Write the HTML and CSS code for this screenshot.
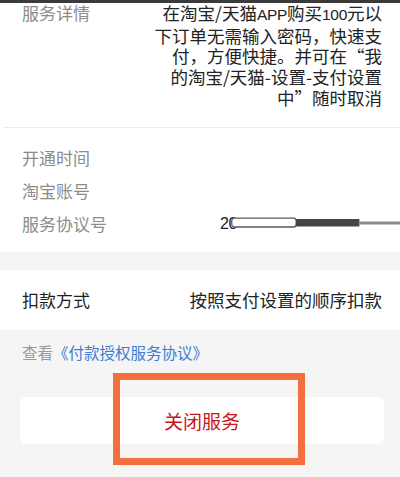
FILE: index.html
```html
<!DOCTYPE html>
<html lang="zh-CN">
<head>
<meta charset="utf-8">
<link rel="stylesheet" href="styles.css">
</head>
<body>
<div class="page">
  <div class="topbar"></div>
  <section class="detail">
    <div class="label">服务详情</div>
    <div class="detail-text">在淘宝/天猫<span class="latin">APP</span>购买<span class="latin">100</span>元以<br>下订单无需输入密码，快速支<br>付，方便快捷。并可在“我<br>的淘宝/天猫-设置-支付设置<br>中”随时取消</div>
  </section>
  <div class="divider"></div>
  <section class="info">
    <div class="row"><span class="label">开通时间</span></div>
    <div class="row"><span class="label">淘宝账号</span></div>
    <div class="row">
      <span class="label">服务协议号</span>
      <span class="agreement-no">
        <span class="num">20</span>
        <svg class="redact" width="170" height="12" viewBox="0 0 170 12">
          <rect x="0.75" y="1" width="65" height="9" rx="3" fill="#fff" stroke="#5a5a5a" stroke-width="1.3"/>
          <rect x="65" y="2" width="64" height="7.5" fill="#444"/>
          <rect x="129" y="4.5" width="41" height="3" fill="#8a8a8a"/>
        </svg>
      </span>
    </div>
  </section>
  <div class="band"></div>
  <section class="pay">
    <span class="pay-label">扣款方式</span>
    <span class="pay-value">按照支付设置的顺序扣款</span>
  </section>
  <section class="footer">
    <div class="agreement">查看<a class="link">《付款授权服务协议》</a></div>
    <div class="close-btn">关闭服务</div>
    <div class="highlight"></div>
  </section>
</div>
</body>
</html>
```
FILE: styles.css
```css
* { box-sizing: border-box; }
html, body {
  margin: 0;
  padding: 0;
  background: #f5f5f5;
}
body {
  font-family: "Noto Sans CJK SC", "Noto Sans", sans-serif;
  color: #222;
}
.page {
  width: 400px;
  height: 477px;
  position: relative;
  overflow: hidden;
  background: #f5f5f5;
}
.topbar {
  height: 3px;
  background: #3a3a3a;
}
.detail {
  background: #fff;
  display: flex;
  justify-content: space-between;
  padding: 0 18px 18px 22px;
  font-size: 17.5px;
  line-height: 20.7px;
}
.label {
  color: #8c8c8c;
  font-size: 17px;
}
.detail-text {
  text-align: right;
  color: #222;
}
.latin {
  font-family: "Liberation Sans", sans-serif;
  font-size: 15.5px;
  letter-spacing: -0.3px;
}
.divider {
  height: 1px;
  border-left: 4px solid #fff;
  background-clip: content-box;
  background-color: #ececec;
}
.info {
  background: #fff;
  padding: 13.5px 18px 11.5px 22px;
}
.row {
  height: 33px;
  display: flex;
  align-items: center;
}
.agreement-no {
  margin-left: auto;
  margin-right: -18px;
  display: flex;
  align-items: center;
  width: 180px;
}
.num {
  font-family: "Liberation Sans", sans-serif;
  font-size: 16px;
  color: #222;
  letter-spacing: -0.5px;
}
.redact {
  display: block;
  margin-left: -6px;
  margin-top: -2px;
}
.band {
  height: 18px;
  background: #f5f5f5;
}
.pay {
  background: #fff;
  height: 60px;
  display: flex;
  align-items: center;
  justify-content: space-between;
  padding: 0 18px 0 22px;
  font-size: 17.5px;
}
.pay-label {
  font-size: 17px;
  color: #1e1e1e;
}
.pay-value {
  color: #222;
}
.footer {
  padding-top: 12px;
}
.agreement {
  padding-left: 22px;
  font-size: 15.5px;
  line-height: 20px;
  color: #9a9a9a;
}
.link {
  color: #3b7dd0;
}
.close-btn {
  margin: 35px 16px 0 20px;
  height: 47px;
  background: #fff;
  border-radius: 6px;
  display: flex;
  align-items: center;
  justify-content: center;
  font-size: 19px;
  color: #c8161e;
}
.highlight {
  position: absolute;
  left: 113px;
  top: 373px;
  width: 192px;
  height: 92px;
  border: 7px solid #f3703e;
}
```
